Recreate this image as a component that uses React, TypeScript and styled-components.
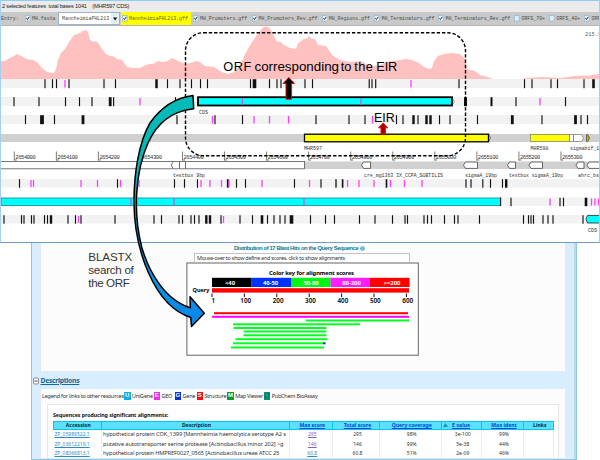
import React from "react";
import styled, { createGlobalStyle } from "styled-components";

const Global = createGlobalStyle`
  html, body { margin: 0; background: #fff; overflow: hidden; }
  * { box-sizing: border-box; }
`;

const sans = '"Liberation Sans", sans-serif';
const humanist = '"Noto Sans", sans-serif';
const mono = '"Liberation Mono", monospace';

const Stage = styled.main`
  position: relative;
  width: 600px;
  height: 460px;
  overflow: hidden;
  background: #fff;
`;

/* ---------- genome viewer window ---------- */

const Viewer = styled.section`
  width: 600px;
  height: 243px;
  overflow: hidden;
  background: #fff;
  border: 1px solid #a3d0ee;
  border-top-color: #8fcdf2;
  border-bottom: 1px solid #6f9cc6;
`;

const StatusLine = styled.header`
  height: 11px;
  padding-left: 1px;
  background: #ebebeb;
  font: 5.6px/11px ${sans};
  letter-spacing: -0.18px;
  white-space: pre;
  color: #222;
`;

const EntryBar = styled.nav`
  display: flex;
  align-items: center;
  height: 14px;
  width: 640px;
  background: #c9c9c9;
  border-bottom: 1px solid #b4b4b4;
  font: 4.93px/8px ${mono};
  color: #4a4a4a;
`;

const EntryTitle = styled.span`
  width: 24px;
`;

const Entry = styled.label<{ $active?: boolean; $w: number }>`
  display: flex;
  flex: none;
  align-items: center;
  gap: 1.5px;
  width: ${(p) => p.$w}px;
  height: 13px;
  padding-left: ${(p) => (p.$active ? 1.5 : 0)}px;
  background: ${(p) => (p.$active ? "#ffff00" : "transparent")};
  color: ${(p) => (p.$active ? "#6d6600" : "#4a4a4a")};
  margin-right: ${(p) => (p.$active ? 2 : 0)}px;
  white-space: nowrap;
`;

const Box = styled.svg`
  flex: none;
  width: 5.5px;
  height: 6.5px;
`;

const Picker = styled.div`
  display: flex;
  flex: none;
  align-items: center;
  justify-content: space-between;
  width: 61.5px;
  height: 13px;
  margin-right: 1px;
  padding: 0 0 0 3px;
  background: #fff;
  border: 1px solid #9db4c8;
`;

const PickerButton = styled.svg`
  width: 8px;
  height: 11px;
  background: #e4edf3;
`;

const Tracks = styled.svg`
  display: block;
  width: 598px;
  height: 216px;
`;

function Check({ on }: { on: boolean }) {
  return (
    <Box viewBox="0 0 6 7">
      <rect x=".4" y=".5" width="5.2" height="6" fill={on ? "#e9f3fa" : "#d8efff"} stroke="#8db3cf" strokeWidth=".7" />
      {on && <path d="M1.5 3.4l1.2 1.5 2-3" fill="none" stroke="#223" strokeWidth="1" />}
    </Box>
  );
}

const entries = [
  { name: "MH_Promoters.gff", on: true, w: 58.5 },
  { name: "MH_Promoters_Rev.gff", on: true, w: 70.2 },
  { name: "MH_Regions.gff", on: true, w: 52.8 },
  { name: "MH_Terminators.gff", on: true, w: 64 },
  { name: "MH_Terminators_Rev.gff", on: true, w: 76 },
  { name: "ORFS_70+", on: false, w: 35 },
  { name: "ORFS_40+", on: false, w: 35 },
  { name: "ORFS_100+", on: true, w: 40 },
];

const gcPlot =
  "1,79 1,61 5,61 8,59 12,57 14,56 17,54 20,55.5 22,56 24,58 30,60 32,59.5 37,62 42,68 47,72 54,73 56,69 58,60 61,53 65,49 69,42 74,35 80,33 83,30.5 85,31 86,29.5 88,32 90,40 94,42 96,41 99,44 102,49 106,54 110,56 114,56.5 117,59 122,60 127,67 133,68 140,68 146,65 150,64 153,64 158,61 162,62 167,61.5 172,58 176,60 180,62 186,64 192,62.5 197,61 200,62 205,66 214,67 222,72 228,74 234,72 241,64 245,54 252,42 257,35 260,31 263,27.5 266,26.5 269,27.5 272,32 277,42 280,41.5 284,45 290,48 296,49 298,43 304,39 307,38.5 309,36 312,39 315,39 318,45 326,46 332,55 340,60 350,62 361,61 368,65 378,66 386,62 392,61 400,60 406,59 412,60 419,63 424,67 429,69 432,68 434,61 438,56 444,54 452,53 460,54 465,59 467,69 475,71 480,75 488,77 493,79 524,79 526,78 542,77 560,78 575,76 590,75.5 599,74 599,79";

type Tick = number | [number, number];
interface Track { y: number; h: number; black: Tick[]; pink: number[] }

const tracks: Track[] = [
  {
    y: 79, h: 9,
    black: [45, 52.5, 56.5, 69, 104, 115.5, [156.5, 2.5], 167.5, 180, 191.5, 200.5, 207.5, 250.5, [254.5, 3.6], 269.5, 277, 281, 305, 312.5, 369.2, 372, 375.7, 459, 524.5, 532, 551, 557.5, 584, [593.5, 2.6]],
    pink: [65, 411],
  },
  {
    y: 97, h: 9,
    black: [14, 39, 65.5, 79.5, 92, [110.2, 2.8], 113.6, 175.5, [465.5, 3], [491.5, 2], 516, 565.5],
    pink: [140, 540],
  },
  {
    y: 115, h: 9,
    black: [25.5, [42, 3.8], 54.5, [83, 2.8], 177, 215, 242.5, 316, 349, 365, 396.5, 403, [413.5, 2.4], 418, [426.5, 2.4], [430.5, 2.4], 439.5, 450, 477.5, [512.3, 2.8], 542, [575.5, 2.8], 581, 587.5],
    pink: [212.5, 254, 269.5, 288.5, 372.5],
  },
  {
    y: 179, h: 8.5,
    black: [19.5, 117.5, 174.5, 184.5, 197.5, [227.8, 1.8], 236.5, 245.5, 294.5, 321, [336, 1.3], [342.6, 1.6], [386.5, 1.6], 466, 471, 482.8, 490.5, 502.5, [506.2, 2.4]],
    pink: [31, 33.5, 81, 97.5, 120.5, 139, 201, 210, 221.5, 229, 262, 309.5, 347.5, 359, 374, 390.5, 404.5, 422],
  },
  { y: 197.5, h: 8.5, black: [511, 560, 563.5, [586, 2.6]], pink: [550, 591.5, 595, 598.5] },
  {
    y: 215, h: 8.5,
    black: [4, 21.5, 24, 31.5, 34, 44.5, 47.5, [51, 2.4], 68, 75.5, 81, 115, 154, 161.5, 179, 182.5, 191, 194.5, 199, [206.3, 2.4], [210, 2.4], 221, 240, 252.5, [262, 2.6], 267.5, 274, 280, 285, [291.5, 3.6], 310.5, 325.5, 334.5, 359.5, 375, 392.5, 405, 407.5, 424, 427.5, 431.5, 444.5, 454.5, 458, 479.5, 523.5, 528.5, 531, 533.5, 543, 548, 553, 583],
    pink: [78.5, 223.5],
  },
];

const rulerMarks = Array.from({ length: 14 }, (_, i) => ({ x: 14.3 + i * 42.05, label: String(2654000 + i * 100) }));

const features = [
  { x: 361.5, w: 9 }, { x: 463.5, w: 14 }, { x: 507.5, w: 8 },
  { x: 529, w: 13.5 }, { x: 576, w: 8 }, { x: 587, w: 14 },
];

const captions: [string, number, number, number][] = [
  ["CDS", 199, 113.5, 9], ["MHR597", 304, 150, 18], ["MHR598", 530.5, 150, 18], ["sigmabif_19bp", 570, 150, 38],
  ["testbox 9bp", 173, 177, 32], ["cre_mg1363 IX_CCPA_SUBTILIS", 364, 177, 79],
  ["sigmaA_19bp", 465, 177, 32], ["testbox sigmaA_19bp", 509, 177, 54], ["ahrc_bsub", 578, 177, 27], ["CDS", 588, 231.5, 9],
];

function GenomeTracks() {
  return (
    <Tracks viewBox="1 26 598 216" fontFamily="Liberation Mono, monospace" fontSize="5.5" fill="#333">
      <polygon points={gcPlot} fill="#ffc0c0" />
      <text x="585" y="35.7" textLength="16.5" lengthAdjust="spacingAndGlyphs" fill="#666">215.5</text>
      {tracks.map((t) => (
        <g key={t.y}>
          <rect x="1" y={t.y} width="598" height={t.h} fill="#f2f2f2" />
          {t.black.map((b, i) => {
            const [x, w] = Array.isArray(b) ? b : [b, 1.15];
            return <rect key={i} x={x - w / 2} y={t.y + 0.2} width={w} height={t.h} fill="#111" />;
          })}
        </g>
      ))}
      <rect x="1" y="134" width="598" height="8" fill="#d0d0d0" />
      <rect x="304.5" y="134.2" width="184" height="7.6" fill="#ff0" stroke="#000" strokeWidth="1.3" />
      <path d="M489 135l1.5 3-1.5 3" fill="none" stroke="#555" strokeWidth=".7" />
      <rect x="530.3" y="134.5" width="39.5" height="7" fill="#ff0" stroke="#777" strokeWidth=".7" />
      <path d="M569.5 134.5h4v7h-4zM573.5 134.5h8l2 3.5-2 3.5h-8z" fill="#fff" stroke="#777" strokeWidth=".7" />
      <path d="M586.5 134.5h1.3l1.7 3.5-1.7 3.5h-1.3z" fill="#b9b000" stroke="#444" strokeWidth=".7" />
      {rulerMarks.map((m) => (
        <g key={m.label}>
          <path d={`M${m.x} 151.5v9M${m.x} 160h2.5`} stroke="#444" strokeWidth=".7" fill="none" />
          <text x={m.x + 1} y="158.8" textLength="20.5">{m.label}</text>
        </g>
      ))}
      <rect x="304" y="161.5" width="296" height="7.5" fill="#d0d0d0" />
      <rect x="0" y="161.5" width="304.5" height="7.3" fill="#fff" stroke="#555" strokeWidth=".8" />
      {features.map((f) => (
        <path key={f.x} d={`M${f.x + 2} 162h${f.w - 2}v6.4h-${f.w - 2}l-2-3.2z`} fill="#fff" stroke="#444" strokeWidth=".8" />
      ))}
      <path d="M172.8 162.3q-3 2.9 0 5.8M179.5 162v6.5M185.5 162v6.5" stroke="#444" strokeWidth=".8" fill="none" />
      <rect x="198" y="97.2" width="254" height="8.3" fill="#0ff" stroke="#000" strokeWidth="1.8" />
      <path d="M453 99l1.3 2.5-1.3 2.5" fill="none" stroke="#777" strokeWidth=".7" />
      <rect x="1" y="198" width="499.5" height="7.5" fill="#0ff" stroke="#087878" strokeWidth=".7" />
      <path d="M500.6 197.5v8.5" stroke="#111" strokeWidth="1.1" />
      <path d="M587.5 215.4h13v7.6h-13l-1.5-3.8z" fill="#0ff" stroke="#222" strokeWidth=".8" />
      <path d="M242.3 98v7M361 98v7" stroke="#c45ce8" strokeWidth="1.3" />
      <path d="M131 198.3v7M174 198.3v7M304 198.3v7" stroke="#c45ce8" strokeWidth="1.4" />
      {tracks.map((t) => t.pink.map((x) => (
        <rect key={`${t.y}-${x}`} x={x - 0.65} y={t.y + 1} width="1.3" height={t.h - 1.5} fill="#ff3cff" />
      )))}
      {captions.map(([s, x, y, w]) => (
        <text key={`${s}${x}`} x={x} y={y} textLength={w} lengthAdjust="spacingAndGlyphs">{s}</text>
      ))}
    </Tracks>
  );
}

/* ---------- BLAST report ---------- */

const Report = styled.section`
  display: flex;
  flex-direction: column;
  width: 546px;
  height: 217px;
  margin-left: 31px;
  padding-left: 8px;
  padding-right: 10px;
  background: #d8eeff;
  border-left: 1px solid #8cc4e6;
  border-right: 1px solid #8cc8ee;
  border-bottom: 1px solid #8cc8ee;
  box-shadow: inset -2px 0 0 #c3d6e4;
`;

const Panel = styled.div<{ $h: number }>`
  flex: none;
  display: flex;
  flex-direction: column;
  height: ${(p) => p.$h}px;
  background: #fcfcfc;
  border: 1px solid #e3eaee;
  border-top: 0;
`;

const HitsTitle = styled.h2`
  display: flex;
  align-items: center;
  gap: 2px;
  height: 10px;
  margin: 0 0 0 193px;
  font: bold 5.9px/9px ${sans};
  letter-spacing: -0.4px;
  color: #087c90;
  white-space: nowrap;
`;

const HelpDot = styled.svg`
  width: 5px;
  height: 5px;
`;

const Hint = styled.div`
  width: 216px;
  height: 9px;
  margin-left: 153px;
  padding-left: 2px;
  border: 1px solid #c4c4c4;
  border-bottom: 0;
  background: #fff;
  font: 5.4px/8px ${humanist};
  letter-spacing: -0.23px;
  color: #333;
  white-space: nowrap;
`;

const HitsChart = styled.svg`
  display: block;
  width: 233px;
  height: 94px;
  margin-left: 145px;
`;

const SectionHead = styled.h3`
  display: flex;
  flex: none;
  align-items: center;
  gap: 1.5px;
  height: 17px;
  margin: 0 0 0 -7px;
  font: bold 6.8px/16px ${humanist};
  letter-spacing: -0.3px;
  color: #16699b;
  text-decoration: underline;
`;

const Toggle = styled.svg`
  width: 6px;
  height: 8px;
`;

const Legend = styled.div`
  display: flex;
  align-items: center;
  height: 17px;
  padding-left: 1px;
  font: 5.5px/14px ${humanist};
  letter-spacing: -0.24px;
  color: #333;
  white-space: nowrap;
`;

const LegendLabel = styled.span<{ $w: number }>`
  flex: none;
  width: ${(p) => p.$w}px;
`;

const Badge = styled.span<{ $c: string }>`
  flex: none;
  width: 6.5px;
  height: 7.5px;
  margin: -1px 1.5px 0 0;
  background: ${(p) => p.$c};
  color: #fff;
  font: bold 6px/7.5px ${sans};
  letter-spacing: 0;
  text-align: center;
`;

const Results = styled.div`
  flex: 1;
  width: 512px;
  margin-left: 6px;
  padding: 6px 0 0 5px;
  background: #fff;
  border: 1px solid #e6e6e6;
  border-bottom: 0;
`;

const Caption = styled.div`
  height: 10px;
  font: bold 5.3px/9px ${humanist};
  letter-spacing: -0.07px;
  color: #111;
  white-space: nowrap;
`;

const Row = styled.div<{ $head?: boolean }>`
  display: grid;
  grid-template-columns: 48.5px 188px 43.5px 47px 61.5px 40.5px 42px 29.5px;
  width: 500.5px;
  height: ${(p) => (p.$head ? 9.5 : 9.2)}px;
  background: ${(p) => (p.$head ? "#5ce0ff" : "#fff")};
  outline: ${(p) => (p.$head ? "1px solid #00c4f4" : "none")};
  outline-offset: -1px;
  font: ${(p) => (p.$head ? "bold 5.1px/8.5px" : "5.65px/9.4px")} ${humanist};
  color: ${(p) => (p.$head ? "#052b38" : "#333")};
`;

const Cell = styled.span<{ $align?: string; $link?: string; $size?: number; $head?: boolean }>`
  overflow: hidden;
  padding: 0 1px 0 ${(p) => (p.$align ? 1.5 : 4)}px;
  border-right: 1px solid ${(p) => (p.$head ? "#00c4f4" : "#eee")};
  text-align: ${(p) => p.$align ?? "center"};
  white-space: nowrap;
  font-size: ${(p) => (p.$size ? `${p.$size}px` : "inherit")};
  color: ${(p) => p.$link ?? "inherit"};
  text-decoration: ${(p) => (p.$link ? "underline" : "none")};
`;

const SortMark = styled.svg`
  width: 5px;
  height: 4px;
  margin-right: 4px;
`;

const keyColors = [
  ["<40", "#000"], ["40-50", "#0032ff"], ["50-80", "#00f514"], ["80-200", "#ff1cff"], [">=200", "#ff0000"],
];

const hits: [number, number, number, string][] = [
  [214, 408, 313.7, "#f00"], [212, 409, 317.3, "#f0f"], [306, 409, 321, "#0f2"], [233, 360, 324.8, "#0f2"],
  [233.5, 326.5, 328.5, "#0f2"], [243.5, 326.5, 332, "#0f2"], [243.5, 326.5, 335.8, "#0f2"],
  [235.5, 327.5, 339.7, "#0f2"], [233, 323.5, 343.8, "#0f2"], [231, 324, 348, "#0f2"], [323, 325.5, 343.8, "#0030d0"],
];

function AlignmentChart() {
  return (
    <HitsChart viewBox="186 262.5 233 94" fontFamily="Noto Sans, sans-serif" fontWeight="bold" fontSize="5.8">
      <rect x="186.9" y="263.5" width="231.4" height="92.2" fill="#fff" stroke="#666" strokeWidth="1" />
      <text x="269" y="275.8" textLength="85">Color key for alignment scores</text>
      {keyColors.map(([label, color], i) => (
        <g key={label}>
          <rect x={212 + i * 39.5} y="278.3" width="39.6" height="9.2" fill={color} />
          <text x={230 + i * 40.5} y="285" textAnchor="middle" fill="#fff">{label}</text>
        </g>
      ))}
      <rect x="212" y="288.7" width="197" height="4.4" fill="#f00" />
      <text x="192.5" y="292.3" textLength="17" fontSize="5" lengthAdjust="spacingAndGlyphs">Query</text>
      {[1, 100, 200, 300, 400, 500, 600].map((n, i) => (
        <g key={n}>
          <path d={`M${212 + i * 32.4} 294v3.6`} stroke="#111" strokeWidth="1" />
          <text x={213.3 + i * 32.4} y="303.6" fontSize="6.3" fontWeight="600" textAnchor="middle">{n}</text>
        </g>
      ))}
      {hits.map(([a, b, y, c]) => <rect key={`${a}-${y}`} x={a} y={y - 1} width={b - a} height="2" fill={c} />)}
    </HitsChart>
  );
}

const legend = [
  { letter: "U", color: "#08b0ec", label: "UniGene", w: 21.5 },
  { letter: "E", color: "#f32cf0", label: "GEO", w: 13 },
  { letter: "G", color: "#0a32d8", label: "Gene", w: 14 },
  { letter: "S", color: "#f01010", label: "Structure", w: 22.7 },
  { letter: "M", color: "#0a9a28", label: "Map Viewer", w: 28.5 },
];

const rows = [
  ["ZP_05989522.1", "hypothetical protein COK_1399 [Mannheimia haemolytica serotype A2 s", "295", "295", "98%", "3e-100", "99%"],
  ["ZP_03612219.1", "putative autotransporter serine protease [Actinobacillus minor 202] >g", "146", "146", "99%", "5e-38", "44%"],
  ["ZP_08066813.1", "hypothetical protein HMPREF0027_0565 [Actinobacillus ureae ATCC 25", "60.8", "60.8", "51%", "2e-09", "46%"],
];

const Clipped = styled.span<{ $ls: number }>`
  letter-spacing: ${(p) => p.$ls}px;
`;

const headings = ["Max score", "Total score", "Query coverage"];
const linkBlue = "#0048d8";

/* ---------- callouts ---------- */

const Overlay = styled.svg`
  position: absolute;
  inset: 0;
  width: 600px;
  height: 460px;
  pointer-events: none;
`;

function Callouts() {
  return (
    <Overlay viewBox="0 0 600 460" fontFamily="Liberation Sans, sans-serif">
      <defs>
        <linearGradient id="flow" x1="0" y1="0" x2="0" y2="1">
          <stop offset="0" stopColor="#00bcb8" />
          <stop offset=".3" stopColor="#0cb4b4" />
          <stop offset=".65" stopColor="#0a9ee0" />
          <stop offset="1" stopColor="#0a84e8" />
        </linearGradient>
      </defs>
      <rect x="185.5" y="32.7" width="280" height="123" rx="18" fill="none" stroke="#000" strokeWidth="1.4" strokeDasharray="3.4 1.9" />
      <path
        d="M193 95.4C174 98 161 107 150 123C139 142 133.8 173 134 203C134.5 250 154 306 190.7 317.5L191.5 326.5L204.3 313.2L190 296.8L190.3 307.8C163 299 148 269 141.7 247C133 213 135 172 148 143C157 123 171 111 193.7 108.7Z"
        fill="url(#flow)" stroke="#000" strokeWidth="1.5" strokeLinejoin="round"
      />
      <path d="M288.8 77.5l5.8 6h-3v15.7h-5.6v-15.7h-3z" fill="#000" stroke="#e01010" strokeWidth="1" />
      <path d="M383.2 123l4.6 4.8h-2.4v6h-4.4v-6h-2.4z" fill="#a80000" stroke="#e01010" strokeWidth="1" />
      <g fontSize="12.8">
        <text x="223.3" y="71" textLength="28">ORF</text>
        <text x="254.5" y="71" textLength="84.5" lengthAdjust="spacingAndGlyphs">corresponding</text>
        <text x="340.7" y="71">to</text>
        <text x="354.3" y="71" textLength="18.5">the</text>
        <text x="376.3" y="71" textLength="21">EIR</text>
      </g>
      <text x="374" y="121.5" fontSize="12.4" textLength="20.7">EIR</text>
      <g fontSize="11.6" fill="#333">
        <text x="88.3" y="260.5" textLength="44">BLASTX</text>
        <text x="88.3" y="274" textLength="45.5">search of</text>
        <text x="88.3" y="287.3" textLength="41.5">the ORF</text>
      </g>
    </Overlay>
  );
}

export default function App() {
  return (
    <Stage>
      <Global />
      <Viewer>
        <StatusLine>{"2 selected features  total bases 1041    (MHR597 CDS)"}</StatusLine>
        <EntryBar>
          <EntryTitle>Entry:</EntryTitle>
          <Entry $w={33}><Check on />MH.fasta</Entry>
          <Picker>
            MannheimiaPHL213
            <PickerButton viewBox="0 0 8 11"><path d="M2 4.5h4.2L4.1 7.5z" fill="#111" /></PickerButton>
          </Picker>
          <Entry $active $w={70.5}><Check on />MannheimiaPHL213.gff</Entry>
          {entries.map((e) => <Entry key={e.name} $w={e.w}><Check on={e.on} />{e.name}</Entry>)}
        </EntryBar>
        <GenomeTracks />
      </Viewer>
      <Report>
        <Panel $h={129}>
          <HitsTitle>
            Distribution of 17 Blast Hits on the Query Sequence
            <HelpDot viewBox="0 0 6 6"><circle cx="3" cy="3" r="2.8" fill="#50a8dc" /><path d="M2.2 2.3q.8-1 1.5 0T3 3.8v.8" fill="none" stroke="#fff" strokeWidth=".7" /></HelpDot>
          </HitsTitle>
          <Hint>Mouse-over to show define and scores, click to show alignments</Hint>
          <AlignmentChart />
        </Panel>
        <SectionHead>
          <Toggle viewBox="0 0 6 8"><rect x=".5" y="1" width="5" height="6" rx="1" fill="#f4f4f4" stroke="#777" strokeWidth=".8" /><path d="M1.5 4h3" stroke="#333" strokeWidth=".8" /></Toggle>
          Descriptions
        </SectionHead>
        <Panel $h={70}>
          <Legend>
            <LegendLabel $w={82}>Legend for links to other resources:</LegendLabel>
            {legend.map((l) => (
              <React.Fragment key={l.letter}>
                <Badge $c={l.color}>{l.letter}</Badge>
                <LegendLabel $w={l.w}>{l.label}</LegendLabel>
              </React.Fragment>
            ))}
            <Badge $c="#0a8f70"><svg width="6" height="7" viewBox="0 0 6 7"><path d="M1 5.5l1.5-3L5 1.5 3.6 4.5z" fill="#35d0a8" stroke="#044" strokeWidth=".5" /></svg></Badge>
            PubChem BioAssay
          </Legend>
          <Results>
            <Caption>Sequences producing significant alignments:</Caption>
            <Row $head>
              <Cell $head>Accession</Cell>
              <Cell $head>Description</Cell>
              {headings.map((h) => <Cell $head key={h} $link={linkBlue}>{h}</Cell>)}
              <Cell $head $align="left" $link={linkBlue}><SortMark viewBox="0 0 5 4"><path d="M0 4L2.5 0 5 4z" fill="#0a9cc0" /></SortMark>E value</Cell>
              <Cell $head $link={linkBlue}>Max ident</Cell>
              <Cell $head>Links</Cell>
            </Row>
            {rows.map((r, i) => (
              <Row key={r[0]}>
                <Cell $align="left" $link="#2b8cc4" $size={5}>{r[0]}</Cell>
                <Cell $align="left"><Clipped $ls={i === 2 ? -0.13 : -0.09}>{r[1]}</Clipped></Cell>
                <Cell $size={5} $link={i < 2 ? "#8462b8" : "#2b8cc4"}>{r[2]}</Cell>
                {r.slice(3).map((v, j) => <Cell key={j} $size={5}>{v}</Cell>)}
                <Cell />
              </Row>
            ))}
          </Results>
        </Panel>
      </Report>
      <Callouts />
    </Stage>
  );
}
